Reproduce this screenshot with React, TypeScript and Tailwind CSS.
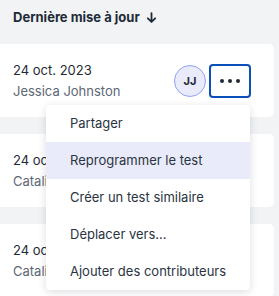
import * as React from "react";

const items = [
  "Partager",
  "Reprogrammer le test",
  "Créer un test similaire",
  "Déplacer vers...",
  "Ajouter des contributeurs",
];

export default function App() {
  return (
    <div
      className="relative h-[296px] w-[279px] overflow-hidden bg-[#f1f3f5]"
      style={{ fontFamily: "Inter, 'Liberation Sans', sans-serif" }}
    >
      <div className="flex h-[44px] items-start px-[13px] pt-[7px]">
        <span className="flex items-center gap-[5px] text-[13px] font-bold leading-[20px] text-[#1f2a37]">
          Dernière mise à jour
          <svg width="13" height="13" viewBox="0 0 16 16" fill="none" stroke="#1f2a37" strokeWidth="2.2" strokeLinecap="round" strokeLinejoin="round">
            <path d="M8 2.5v11M3.5 9 8 13.5 12.5 9" />
          </svg>
        </span>
      </div>

      <div className="flex w-[274px] flex-col gap-[17px]">
        <Card name="Jessica Johnston" showActions />
        <Card name="Catalina Ruiz" />
        <Card name="Catalina Ruiz" />
      </div>

      <div className="absolute left-[46px] top-[105px] w-[204px] overflow-hidden rounded-[4px] bg-white shadow-[0_2px_8px_rgba(16,24,40,0.14)]">
        {items.map((label, i) => (
          <div
            key={label}
            className={`flex h-[37px] items-center pl-[24px] text-[13px] text-[#2a3441] ${
              i === 1 ? "bg-[#e9ebfb]" : ""
            }`}
          >
            {label}
          </div>
        ))}
      </div>
    </div>
  );
}

function Card({ name, showActions }: { name: string; showActions?: boolean }) {
  return (
    <div className="flex h-[73px] items-start justify-between rounded-r-[5px] bg-white pl-[13px] pr-[23px] pt-[16px]">
      <div className="flex flex-col">
        <span className="text-[13px] leading-[20px] text-[#1f2a37]">24 oct. 2023</span>
        <span className="mt-[1px] text-[13px] leading-[20px] text-[#5d6775]">{name}</span>
      </div>
      {showActions && (
        <div className="mt-[4px] flex items-center gap-[3px]">
          <div className="flex h-[32px] w-[32px] items-center justify-center rounded-full border border-[#93a3f3] bg-[#e9ebfb] text-[11px] font-bold text-[#1f2a37]">
            JJ
          </div>
          <button className="flex h-[34px] w-[42px] items-center justify-center gap-[4px] rounded-[4px] border-2 border-[#0a50b8] bg-white">
            <span className="h-[4px] w-[4px] rounded-full bg-[#1f2a37]" />
            <span className="h-[4px] w-[4px] rounded-full bg-[#1f2a37]" />
            <span className="h-[4px] w-[4px] rounded-full bg-[#1f2a37]" />
          </button>
        </div>
      )}
    </div>
  );
}
